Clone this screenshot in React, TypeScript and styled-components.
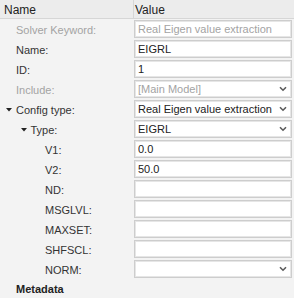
import * as React from "react";
import styled, { createGlobalStyle } from "styled-components";

type Field = {
  label: string;
  value?: string;
  level: number;
  kind: "text" | "select";
  disabled?: boolean;
  expander?: boolean;
};

const fields: Field[] = [
  { label: "Solver Keyword:", value: "Real Eigen value extraction", level: 0, kind: "text", disabled: true },
  { label: "Name:", value: "EIGRL", level: 0, kind: "text" },
  { label: "ID:", value: "1", level: 0, kind: "text" },
  { label: "Include:", value: "[Main Model]", level: 0, kind: "select", disabled: true },
  { label: "Config type:", value: "Real Eigen value extraction", level: 0, kind: "select", expander: true },
  { label: "Type:", value: "EIGRL", level: 1, kind: "select", expander: true },
  { label: "V1:", value: "0.0", level: 2, kind: "text" },
  { label: "V2:", value: "50.0", level: 2, kind: "text" },
  { label: "ND:", level: 2, kind: "text" },
  { label: "MSGLVL:", level: 2, kind: "text" },
  { label: "MAXSET:", level: 2, kind: "text" },
  { label: "SHFSCL:", level: 2, kind: "text" },
  { label: "NORM:", level: 2, kind: "select" },
];

const Chevron = () => (
  <svg width="8" height="6" viewBox="0 0 8 6">
    <path d="M1 1.2 L4 4.2 L7 1.2" fill="none" stroke="#5a5a5a" strokeWidth="1.6" />
  </svg>
);

const Caret = () => (
  <svg width="6" height="4" viewBox="0 0 6 4">
    <polygon points="0,0 6,0 3,3.5" fill="#222" />
  </svg>
);

const App: React.FunctionComponent = () => {
  return (
    <>
      <GlobalStyle />
      <Panel>
        <Header>
          <HeadCell>Name</HeadCell>
          <HeadCell $divider>Value</HeadCell>
        </Header>
        {fields.map((f) => (
          <Row key={f.label}>
            <Label $level={f.level} $disabled={f.disabled}>
              {f.expander && (
                <Expander>
                  <Caret />
                </Expander>
              )}
              {f.label}
            </Label>
            <ValueCell>
              <Box $disabled={f.disabled}>
                <BoxText>{f.value}</BoxText>
                {f.kind === "select" && <Chevron />}
              </Box>
            </ValueCell>
          </Row>
        ))}
        <Section>Metadata</Section>
      </Panel>
    </>
  );
};

export default App;

const GlobalStyle = createGlobalStyle`
  html, body {
    margin: 0;
    padding: 0;
    background: #f3f3f3;
  }
  body {
    font-family: "Liberation Sans", Arial, sans-serif;
    font-size: 11px;
    color: #333;
  }
`;

const Panel = styled.div`
  width: 294px;
  height: 298px;
  overflow: hidden;
  background: #f3f3f3;
`;

const Header = styled.div`
  display: grid;
  grid-template-columns: 133px 1fr;
  height: 19px;
  background: #ececec;
  border-bottom: 1px solid #d6d6d6;
  box-sizing: border-box;
`;

const HeadCell = styled.div<{ $divider?: boolean }>`
  display: flex;
  align-items: center;
  padding-left: ${({ $divider }) => ($divider ? "1px" : "4px")};
  padding-top: 2px;
  font-size: 12px;
  color: #222;
  border-left: ${({ $divider }) => ($divider ? "1px solid #d6d6d6" : "none")};
`;

const Row = styled.div`
  display: grid;
  grid-template-columns: 134px 1fr;
  height: 20px;
  align-items: center;
`;

const Label = styled.div<{ $level: number; $disabled?: boolean }>`
  position: relative;
  padding-left: ${({ $level }) => 16 + $level * 14.5}px;
  color: ${({ $disabled }) => ($disabled ? "#a3a3a3" : "#333")};
  white-space: nowrap;
  padding-top: 1px;
`;

const Expander = styled.span`
  position: absolute;
  margin-left: -10px;
  top: 5px;
  line-height: 0;
`;

const ValueCell = styled.div`
  padding: 1px 2px 1px 0;
  height: 20px;
  box-sizing: border-box;
`;

const Box = styled.div<{ $disabled?: boolean }>`
  display: flex;
  align-items: center;
  height: 18px;
  box-sizing: border-box;
  background: #fff;
  border: 1px solid #cdcdcd;
  box-shadow: inset 0 0 0 1px #e6e6e6;
  padding: 0 4px 0 3px;
  color: ${({ $disabled }) => ($disabled ? "#a3a3a3" : "#222")};
`;

const BoxText = styled.span`
  flex: 1;
  white-space: nowrap;
  overflow: hidden;
`;

const Section = styled.div`
  padding-left: 16px;
  height: 20px;
  display: flex;
  align-items: center;
  font-weight: bold;
  color: #222;
`;
